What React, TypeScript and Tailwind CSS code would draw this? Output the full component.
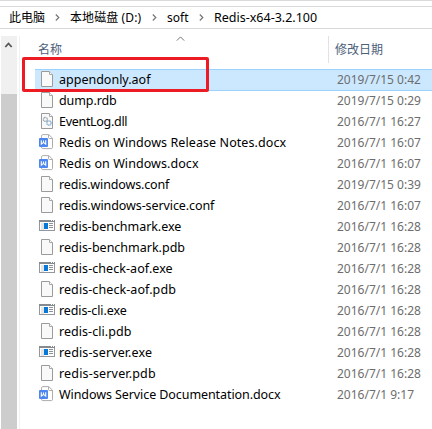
import React from "react";

type Kind = "file" | "dll" | "doc" | "exe";

const rows: { kind: Kind; name: string; date: string; track: string }[] = [
  { kind: "file", name: "appendonly.aof", date: "2019/7/15 0:42", track: "tracking-[0px]" },
  { kind: "file", name: "dump.rdb", date: "2019/7/15 0:29", track: "tracking-[-0.1px]" },
  { kind: "dll", name: "EventLog.dll", date: "2016/7/1 16:27", track: "tracking-[-0.3px]" },
  { kind: "doc", name: "Redis on Windows Release Notes.docx", date: "2016/7/1 16:07", track: "tracking-[0.08px]" },
  { kind: "doc", name: "Redis on Windows.docx", date: "2016/7/1 16:07", track: "tracking-[0.07px]" },
  { kind: "file", name: "redis.windows.conf", date: "2019/7/15 0:39", track: "tracking-[-0.14px]" },
  { kind: "file", name: "redis.windows-service.conf", date: "2016/7/1 16:07", track: "tracking-[-0.09px]" },
  { kind: "exe", name: "redis-benchmark.exe", date: "2016/7/1 16:28", track: "tracking-[-0.05px]" },
  { kind: "file", name: "redis-benchmark.pdb", date: "2016/7/1 16:28", track: "tracking-[0px]" },
  { kind: "exe", name: "redis-check-aof.exe", date: "2016/7/1 16:28", track: "tracking-[0.06px]" },
  { kind: "file", name: "redis-check-aof.pdb", date: "2016/7/1 16:28", track: "tracking-[0.08px]" },
  { kind: "exe", name: "redis-cli.exe", date: "2016/7/1 16:28", track: "tracking-[-0.1px]" },
  { kind: "file", name: "redis-cli.pdb", date: "2016/7/1 16:28", track: "tracking-[0.05px]" },
  { kind: "exe", name: "redis-server.exe", date: "2016/7/1 16:28", track: "tracking-[0.12px]" },
  { kind: "file", name: "redis-server.pdb", date: "2016/7/1 16:28", track: "tracking-[0.17px]" },
  { kind: "doc", name: "Windows Service Documentation.docx", date: "2016/7/1 9:17", track: "tracking-[-0.08px]" },
];

function Icon({ kind }: { kind: Kind }) {
  if (kind === "exe")
    return (
      <svg width="16" height="16" viewBox="0 0 16 16" className="shrink-0" shapeRendering="crispEdges">
        <rect x="0.5" y="2.5" width="15" height="10" fill="#fff" stroke="#91979d" />
        <rect x="0" y="2" width="16" height="2" fill="#858a8f" />
        <rect x="12" y="2" width="1" height="1" fill="#fff" />
        <rect x="14" y="2" width="1" height="1" fill="#fff" />
        <rect x="2" y="5" width="3" height="7" fill="#e3e5e7" />
        <rect x="5" y="5" width="4" height="6" fill="#0878d6" />
        <path d="M10 5.5h4M10 7.5h4M10 9.5h4" stroke="#8b9299" />
      </svg>
    );
  if (kind === "doc")
    return (
      <svg width="16" height="16" viewBox="0 0 16 16" className="shrink-0">
        <path d="M2.5 13V2.2Q2.5 .6 3.8 .6H9.8L13.5 4.2V13.3Q13.5 14.6 12.3 14.6H3.8Q2.5 14.6 2.5 13Z" fill="#fff" stroke="#adadad" />
        <path d="M9.5 1V3.5Q9.5 4.5 10.5 4.5H13.5" fill="none" stroke="#adadad" />
        <rect x="0" y="4" width="9" height="9" rx="1" fill="#4d86ee" />
        <path d="M2.3 6.2V10.2L4.5 8.4L6.7 10.2V6.2M4.5 6.4V8.4" fill="none" stroke="#fff" strokeWidth="1.1" />
      </svg>
    );
  return (
    <svg width="16" height="16" viewBox="0 0 16 16" className="shrink-0">
      <path d="M2.5 .5H10.5L13.5 3.5V15.5H2.5Z" fill="#f9f9f9" stroke="#9b9b9b" />
      <path d="M10.5 .5V3.5H13.5" fill="#fff" stroke="#a8a8a8" />
      {kind === "dll" && (
        <g fill="none">
          <circle cx="6.4" cy="6.4" r="2" stroke="#a0a8ae" strokeWidth="1.4" strokeDasharray="1.1 .3" />
          <circle cx="10" cy="10" r="2.1" stroke="#86b1cf" strokeWidth="1.4" strokeDasharray="1.1 .3" />
        </g>
      )}
    </svg>
  );
}

function Crumb() {
  return (
    <svg width="5" height="7" viewBox="0 0 5 7" className="shrink-0" fill="none" stroke="#777" strokeWidth="1.2">
      <path d="M.8 .5L3.8 3.5L.8 6.5" />
    </svg>
  );
}

export default function App() {
  return (
    <div className="relative flex h-[429px] w-[432px] flex-col overflow-hidden bg-white font-['Noto_Sans','Noto_Sans_CJK_SC',sans-serif] text-[12px] leading-[21px] text-black">
      <div className="h-[6px] shrink-0 border-t border-[#dadada]" />
      <div className="flex h-[23px] shrink-0 items-center border-y border-[#d9d9d9] pb-px pl-[9px] whitespace-nowrap">
        <span className="w-[46px]">此电脑</span>
        <Crumb />
        <span className="ml-[10px] w-[82px] tracking-[0.1px]">本地磁盘 (D:)</span>
        <Crumb />
        <span className="ml-[10px] w-[32px]">soft</span>
        <Crumb />
        <span className="ml-[10px] text-[12.5px]">Redis-x64-3.2.100</span>
      </div>
      <div className="flex min-h-0 flex-1 pt-[7px]">
        <div className="ml-px flex w-4 shrink-0 flex-col bg-[#f0f0f0]">
          <svg width="16" height="58" viewBox="0 0 16 58" className="shrink-0" fill="none" stroke="#555" strokeWidth="1.8">
            <path d="M4.3 11L7.5 7.5L10.7 11" />
          </svg>
          <div className="flex-1 bg-[#cdcdcd]" />
        </div>
        <div className="ml-[2px] w-px shrink-0 bg-[#f2f2f2]" />
        <div className="flex min-w-0 flex-1 flex-col pl-[15px]">
          <div className="relative flex h-[27px] shrink-0 items-center text-[#4c607a]">
            <span className="w-[293px] pl-[3px]">名称</span>
            <span className="h-full w-px bg-[#e2e2e2]" />
            <span className="pl-[6px]">修改日期</span>
            <svg className="absolute left-[141px] top-0" width="9" height="6" viewBox="0 0 9 6" fill="none" stroke="#777">
              <path d="M.8 4.6L4.5 .9L8.2 4.6" />
            </svg>
          </div>
          <div className="mt-[6px]">
            {rows.map((r, i) => (
              <div
                key={r.name}
                className={
                  i === 0
                    ? "-mb-px flex h-[22px] items-start border-y border-[#99d1ff] bg-[#cce8ff] whitespace-nowrap"
                    : "flex h-[21px] items-start whitespace-nowrap"
                }
              >
                <span className={i === 0 ? "mt-px ml-[4px] flex w-[20px]" : "mt-[2px] ml-[4px] flex w-[20px]"}>
                  <Icon kind={r.kind} />
                </span>
                <span className={(i === 0 ? "-mt-px " : "") + "w-[278px] text-[12.5px] " + r.track}>{r.name}</span>
                <span className={(i === 0 ? "-mt-px " : "") + "text-[#6d6d6d]"}>{r.date}</span>
              </div>
            ))}
          </div>
        </div>
      </div>
      <div className="absolute left-[22px] top-[57px] h-[35px] w-[187px] rounded-[2px] border-[3px] border-[#ed1c24]" />
    </div>
  );
}
